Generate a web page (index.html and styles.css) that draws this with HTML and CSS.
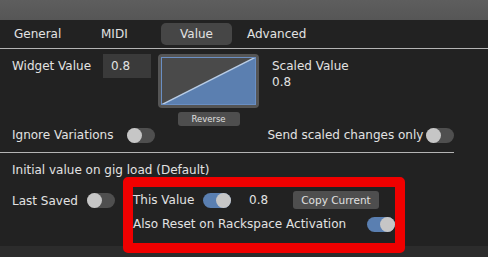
FILE: index.html
```html
<!DOCTYPE html>
<html lang="en">
<head>
    <meta charset="UTF-8">
    <title>Widget Value</title>
    <link rel="stylesheet" href="styles.css">
</head>
<body>
    <div class="titlebar"></div>
    <div class="panel">
        <div class="tabs">
            <div class="tab tab-general">General</div>
            <div class="tab tab-midi">MIDI</div>
            <div class="tab tab-value active">Value</div>
            <div class="tab tab-advanced">Advanced</div>
        </div>

        <div class="section top-section">
            <div class="value-row">
                <div class="label widget-label">Widget Value</div>
                <div class="input">0.8</div>
                <div class="curve-col">
                    <div class="curve">
                        <svg width="95" height="48" viewBox="0 0 95 48">
                            <rect x="0" y="0" width="95" height="48" fill="#4a4a4a"/>
                            <polygon points="0,48 95,0 95,48" fill="#5b7fb0"/>
                            <line x1="0" y1="48" x2="95" y2="0" stroke="#b9cde6" stroke-width="1.5"/>
                            <rect x="0.5" y="0.5" width="94" height="47" fill="none" stroke="#6a8fc4"/>
                        </svg>
                    </div>
                    <button class="small-btn reverse">Reverse</button>
                </div>
                <div class="scaled">
                    <div>Scaled Value</div>
                    <div>0.8</div>
                </div>
            </div>
            <div class="option-row">
                <div class="option ignore">
                    <span class="label">Ignore Variations</span>
                    <span class="toggle"></span>
                </div>
                <div class="option send">
                    <span class="label">Send scaled changes only</span>
                    <span class="toggle"></span>
                </div>
            </div>
        </div>

        <div class="section bottom-section">
            <div class="label heading">Initial value on gig load (Default)</div>
            <div class="load-row">
                <div class="option last-saved">
                    <span class="label">Last Saved</span>
                    <span class="toggle"></span>
                </div>
                <div class="highlight">
                    <div class="hl-line">
                        <span class="label this-label">This Value</span>
                        <span class="toggle on"></span>
                        <span class="label this-num">0.8</span>
                        <button class="small-btn copy">Copy Current</button>
                    </div>
                    <div class="hl-line">
                        <span class="label">Also Reset on Rackspace Activation</span>
                        <span class="toggle on reset-toggle"></span>
                    </div>
                </div>
            </div>
        </div>
    </div>
</body>
</html>
```
FILE: styles.css
```css
* {
    box-sizing: border-box;
}

body {
    margin: 0;
    width: 488px;
    height: 257px;
    overflow: hidden;
    background: #2c2c2c;
    font-family: "DejaVu Sans", sans-serif;
    font-size: 12px;
    color: #e2e2e2;
    white-space: nowrap;
}

.titlebar {
    height: 20px;
    background: linear-gradient(#5e5e5e, #565656);
}

.panel {
    height: 226px;
    background: #222222;
}

.tabs {
    display: flex;
    align-items: flex-start;
    height: 29px;
    padding-top: 3px;
    border-bottom: 1px solid #b4b4b4;
}

.tab {
    height: 22px;
    line-height: 22px;
    font-size: 12px;
}

.tab-general {
    margin-left: 14px;
    width: 87px;
}

.tab-midi {
    width: 60px;
}

.tab-value {
    width: 71px;
    text-align: center;
    background: #464646;
    border-radius: 5px;
}

.tab-advanced {
    margin-left: 15px;
}

.section {
    padding-left: 12px;
}

.top-section {
    height: 104px;
    border-bottom: 1px solid #b4b4b4;
    width: 454px;
}

.value-row {
    display: flex;
    align-items: flex-start;
    padding-top: 5px;
}

.widget-label {
    width: 91px;
    line-height: 24px;
}

.input {
    width: 48px;
    height: 24px;
    line-height: 24px;
    padding-left: 8px;
    background: #3a3a3a;
    font-size: 12px;
}

.curve-col {
    margin-left: 7px;
    display: flex;
    flex-direction: column;
    align-items: center;
}

.curve {
    width: 101px;
    height: 54px;
    padding: 3px;
    background: #555555;
    border-radius: 4px;
}

.curve svg {
    display: block;
}

.small-btn {
    border: none;
    background: #4e4e4e;
    color: #e0e0e0;
    font-family: "DejaVu Sans", sans-serif;
    border-radius: 3px;
    padding: 0;
}

.reverse {
    margin-top: 4px;
    width: 62px;
    height: 14px;
    font-size: 8.5px;
}

.scaled {
    margin-left: 13px;
    padding-top: 4px;
    line-height: 16px;
}

.option-row {
    display: flex;
    margin-top: 1px;
    height: 16px;
    align-items: center;
}

.option {
    display: flex;
    align-items: center;
}

.ignore {
    width: 260px;
}

.ignore .label {
    width: 115px;
}

.send {
    width: 190px;
}

.send .toggle {
    margin-left: auto;
}

.label {
    font-size: 12px;
}

.toggle {
    position: relative;
    display: inline-block;
    flex: none;
    width: 28px;
    height: 15px;
    border-radius: 8px;
    background: #4f4f4f;
}

.toggle::after {
    content: "";
    position: absolute;
    left: 0;
    top: 0;
    width: 15px;
    height: 15px;
    border-radius: 50%;
    background: #c6c6c6;
}

.toggle.on {
    background: #5a7fb1;
}

.toggle.on::after {
    left: auto;
    right: 0;
}

.heading {
    margin-top: 9px;
    line-height: 16px;
}

.load-row {
    display: flex;
    align-items: flex-start;
    margin-top: -1px;
}

.last-saved {
    margin-top: 16px;
    width: 103px;
}

.last-saved .toggle {
    margin-left: auto;
}

.highlight {
    margin-left: 8px;
    width: 282px;
    height: 76px;
    border: 10px solid #f00000;
    border-radius: 5px;
    display: flex;
    flex-direction: column;
    gap: 6px;
    padding-top: 4px;
}

.hl-line {
    display: flex;
    align-items: center;
    height: 18px;
}

.this-label {
    width: 70px;
}

.this-num {
    margin-left: 18px;
    width: 44px;
}

.copy {
    width: 86px;
    height: 18px;
    font-size: 10.5px;
}

.hl-line .reset-toggle {
    margin-left: auto;
}
```
